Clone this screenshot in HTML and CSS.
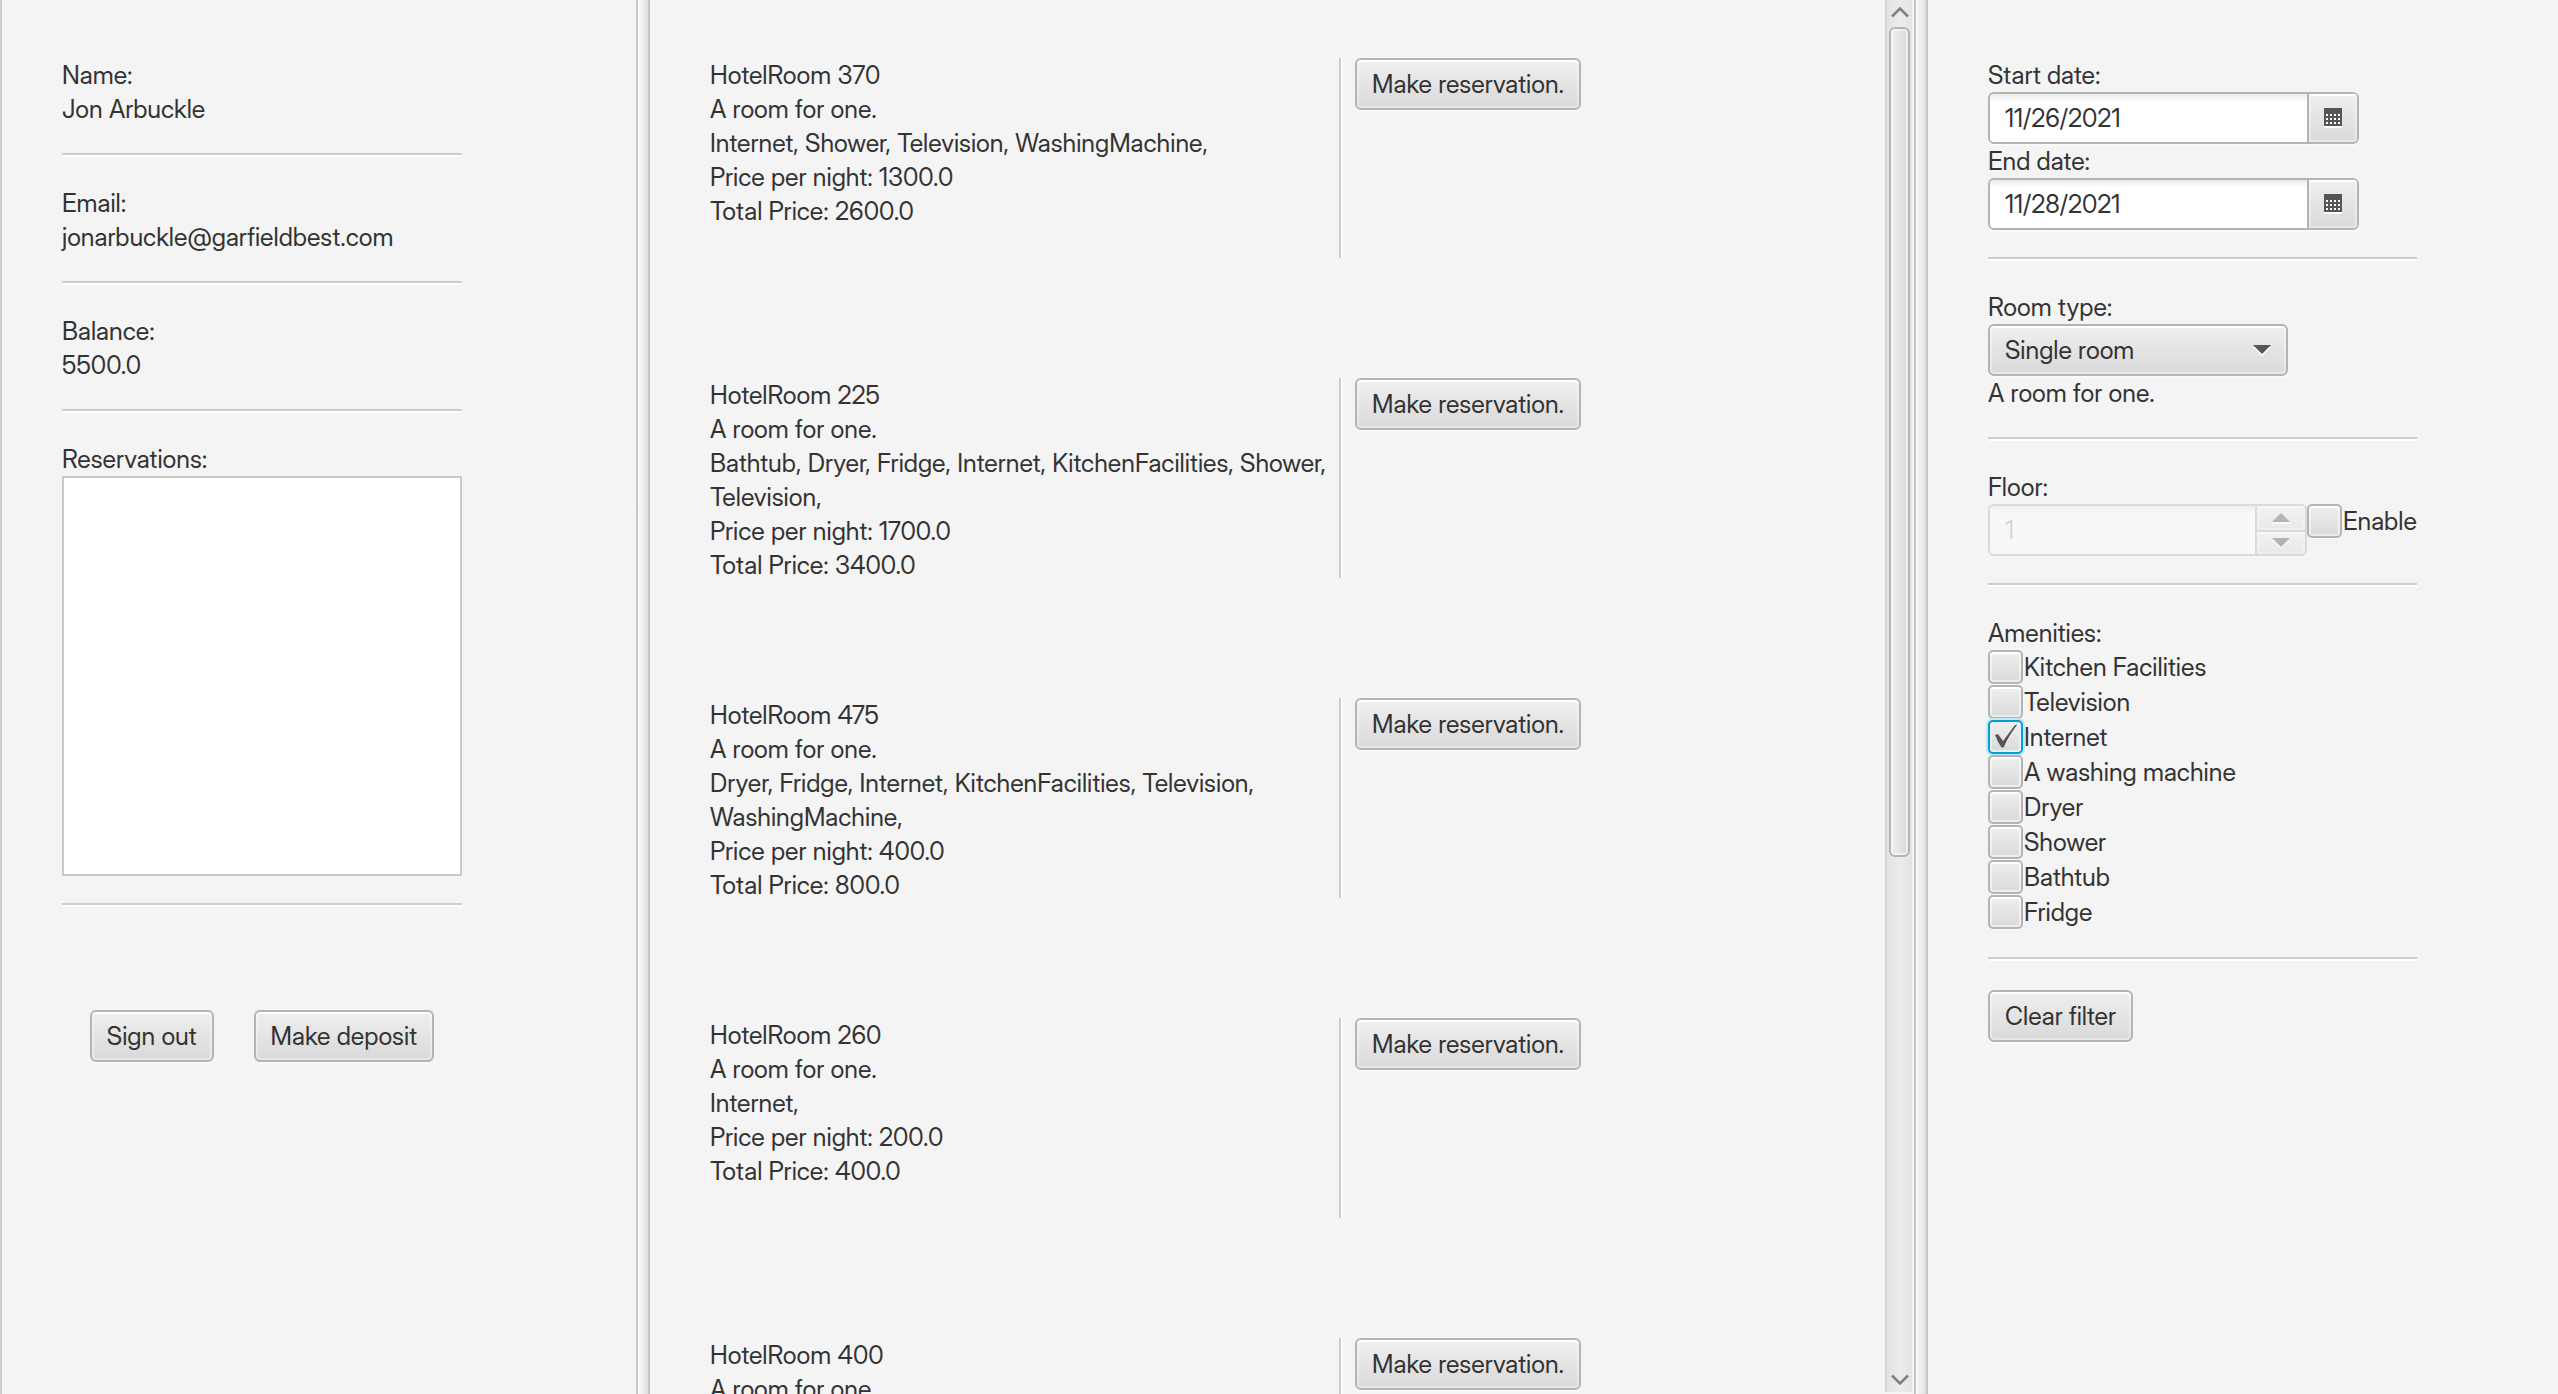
FILE: index.html
```html
<!DOCTYPE html>
<html lang="en">
<head>
<meta charset="utf-8">
<title>Hotel reservations</title>
<link rel="stylesheet" href="styles.css">
</head>
<body>
<div class="split">
  <aside class="pane account">
    <div class="account-body">
      <p>Name:</p>
      <p>Jon Arbuckle</p>
      <hr>
      <p>Email:</p>
      <p>jonarbuckle@garfieldbest.com</p>
      <hr>
      <p>Balance:</p>
      <p>5500.0</p>
      <hr>
      <p>Reservations:</p>
      <div class="reservations"></div>
      <hr>
      <div class="actions">
        <button class="btn" type="button">Sign out</button>
        <button class="btn" type="button">Make deposit</button>
      </div>
    </div>
  </aside>
  <div class="divider"></div>
  <main class="pane results">
    <div class="rooms">
      <article class="room">
        <div class="room-text">
          <p>HotelRoom 370</p>
          <p>A room for one.</p>
          <p>Internet, Shower, Television, WashingMachine,</p>
          <p>Price per night: 1300.0</p>
          <p>Total Price: 2600.0</p>
        </div>
        <div class="rule"></div>
        <button class="btn" type="button">Make reservation.</button>
      </article>
      <article class="room">
        <div class="room-text">
          <p>HotelRoom 225</p>
          <p>A room for one.</p>
          <p>Bathtub, Dryer, Fridge, Internet, KitchenFacilities, Shower, Television,</p>
          <p>Price per night: 1700.0</p>
          <p>Total Price: 3400.0</p>
        </div>
        <div class="rule"></div>
        <button class="btn" type="button">Make reservation.</button>
      </article>
      <article class="room">
        <div class="room-text">
          <p>HotelRoom 475</p>
          <p>A room for one.</p>
          <p>Dryer, Fridge, Internet, KitchenFacilities, Television, WashingMachine,</p>
          <p>Price per night: 400.0</p>
          <p>Total Price: 800.0</p>
        </div>
        <div class="rule"></div>
        <button class="btn" type="button">Make reservation.</button>
      </article>
      <article class="room">
        <div class="room-text">
          <p>HotelRoom 260</p>
          <p>A room for one.</p>
          <p>Internet,</p>
          <p>Price per night: 200.0</p>
          <p>Total Price: 400.0</p>
        </div>
        <div class="rule"></div>
        <button class="btn" type="button">Make reservation.</button>
      </article>
      <article class="room">
        <div class="room-text">
          <p>HotelRoom 400</p>
          <p>A room for one.</p>
        </div>
        <div class="rule"></div>
        <button class="btn" type="button">Make reservation.</button>
      </article>
    </div>
    <div class="scrollbar">
      <svg class="scroll-arrow" viewBox="0 0 18 12"><path d="M1 10.500 9 2.500 17 10.500" fill="none" stroke="#808080" stroke-width="2.500"/></svg>
      <div class="track"><div class="thumb"></div></div>
      <svg class="scroll-arrow" viewBox="0 0 18 12"><path d="M1 1.500 9 9.500 17 1.500" fill="none" stroke="#808080" stroke-width="2.500"/></svg>
    </div>
  </main>
  <div class="divider"></div>
  <aside class="pane filter">
    <form class="filter-body">
      <label for="start">Start date:</label>
      <div class="field date">
        <input id="start" type="text" value="11/26/2021">
        <button type="button" aria-label="Pick start date">
          <svg width="18" height="20" viewBox="0 0 18 20"><path fill="#fff" d="M0 18h18v2H0z"/><path fill="#555" d="M0 0h18v18H0z"/><path fill="#fff" d="M2 6h2v2H2zM6 6h2v2H6zM10 6h2v2h-2zM14 6h2v2h-2zM2 10h2v2H2zM6 10h2v2H6zM10 10h2v2h-2zM14 10h2v2h-2zM2 14h2v2H2zM6 14h2v2H6zM10 14h2v2h-2zM14 14h2v2h-2z"/></svg>
        </button>
      </div>
      <label for="end">End date:</label>
      <div class="field date">
        <input id="end" type="text" value="11/28/2021">
        <button type="button" aria-label="Pick end date">
          <svg width="18" height="20" viewBox="0 0 18 20"><path fill="#fff" d="M0 18h18v2H0z"/><path fill="#555" d="M0 0h18v18H0z"/><path fill="#fff" d="M2 6h2v2H2zM6 6h2v2H6zM10 6h2v2h-2zM14 6h2v2h-2zM2 10h2v2H2zM6 10h2v2H6zM10 10h2v2h-2zM14 10h2v2h-2zM2 14h2v2H2zM6 14h2v2H6zM10 14h2v2h-2zM14 14h2v2h-2z"/></svg>
        </button>
      </div>
      <hr>
      <label for="type">Room type:</label>
      <select class="btn" id="type"><option>Single room</option></select>
      <p>A room for one.</p>
      <hr>
      <label for="floor">Floor:</label>
      <div class="floor">
        <div class="field spinner">
          <input id="floor" type="text" value="1" disabled>
          <div class="steps">
            <button type="button" aria-label="Up" disabled><svg width="18" height="11" viewBox="0 0 18 11"><path fill="#fff" d="M0 9h18v2H0z"/><path fill="#555" d="M0 9 9 0l9 9z"/></svg></button>
            <button type="button" aria-label="Down" disabled><svg width="18" height="11" viewBox="0 0 18 11"><path fill="#fff" d="M0 2h18l-9 9z"/><path fill="#555" d="M0 0h18L9 9z"/></svg></button>
          </div>
        </div>
        <label class="check"><input type="checkbox">Enable</label>
      </div>
      <hr>
      <p>Amenities:</p>
      <label class="check"><input type="checkbox">Kitchen Facilities</label>
      <label class="check"><input type="checkbox">Television</label>
      <label class="check"><input class="focused" type="checkbox" checked>Internet</label>
      <label class="check"><input type="checkbox">A washing machine</label>
      <label class="check"><input type="checkbox">Dryer</label>
      <label class="check"><input type="checkbox">Shower</label>
      <label class="check"><input type="checkbox">Bathtub</label>
      <label class="check"><input type="checkbox">Fridge</label>
      <hr>
      <button class="btn" type="button">Clear filter</button>
    </form>
  </aside>
</div>
</body>
</html>
```
FILE: styles.css
```css
* { box-sizing: border-box; }

body {
  margin: 0;
  background: #f4f4f4;
  color: #333;
  font: 25px/34px "Inter Display", Inter, "Liberation Sans", sans-serif;
}

p { margin: 0; }

button, input, select { font: inherit; color: inherit; }

.split {
  display: grid;
  grid-template-columns: 636fr 14px 1264fr 14px 630fr;
  height: 100vh;
  overflow: hidden;
}

.pane { min-width: 0; min-height: 0; overflow: hidden; }

.divider {
  border: solid #c6c6c6;
  border-width: 0 2px;
  background: linear-gradient(90deg, #fbfbfb, #dedede);
}

hr {
  width: 100%;
  height: 4px;
  margin: 27px 0 29px;
  border: 0;
  border-top: 2px solid #ccc;
  background: #fff;
}

.btn {
  height: 52px;
  padding: 0 15px;
  border: 2px solid #b4b4b4;
  border-radius: 6px;
  background: linear-gradient(#efefef, #d9d9d9);
  box-shadow: inset 0 2px #fff, inset 0 0 0 2px rgba(255, 255, 255, .35), 0 2px #fafafa;
  white-space: nowrap;
}

/* Account column */
.account { border-left: 2px solid #ccc; padding: 58px 60px; }
.account-body { width: 400px; }
.reservations { height: 400px; border: 2px solid #c8c8c8; background: #fff; }
.actions { display: flex; justify-content: center; gap: 40px; padding-top: 74px; }

/* Available rooms */
.results { display: flex; }
.rooms { flex: 1; padding: 58px 60px; }
.room { display: flex; align-items: flex-start; height: 200px; margin-bottom: 120px; }
.room-text { width: 629px; }
.rule { width: 4px; height: 200px; margin-right: 12px; border-left: 2px solid #ccc; background: #fff; }

.scrollbar {
  display: flex;
  flex-direction: column;
  align-items: center;
  width: 27px;
  margin: 0 2px 2px 0;
  padding: 6px 0;
  border-left: 2px solid #d6d6d6;
  background: linear-gradient(90deg, #e2e2e2, #ebebeb 50%, #e4e4e4);
}
.scroll-arrow { flex: none; width: 18px; height: 12px; }
.track { flex: 1; width: 21px; padding: 9px 0; }
.thumb {
  height: 62%;
  border: 2px solid #b4b4b4;
  border-radius: 6px;
  background: linear-gradient(90deg, #efefef, #d9d9d9);
  box-shadow: inset 0 0 0 2px rgba(255, 255, 255, .5);
}

/* Filter column */
.filter { padding: 58px 60px; }
.filter-body { display: flex; flex-direction: column; align-items: flex-start; width: 429px; }

.field {
  display: flex;
  height: 52px;
  border: 2px solid #b4b4b4;
  border-radius: 6px;
  box-shadow: 0 2px #fafafa;
  overflow: hidden;
}
.field input {
  flex: 1;
  min-width: 0;
  padding: 0 15px;
  border: 0;
  background: linear-gradient(#ececec, #fff 8px);
}
.field button {
  display: flex;
  align-items: center;
  justify-content: center;
  width: 48px;
  padding: 0;
  border: 0;
  background: linear-gradient(#efefef, #d9d9d9);
  box-shadow: inset 0 2px #fff, inset 0 0 0 2px rgba(255, 255, 255, .35);
}
.date { width: 371px; }
.field.date button { width: 50px; border-left: 2px solid #b4b4b4; }

.floor { display: flex; align-items: flex-start; }
.spinner { width: 319px; opacity: .4; }
.spinner input { color: #adadad; }
.steps { display: grid; grid-template-rows: 1fr 1fr; width: 50px; border-left: 2px solid #b4b4b4; }
.steps button + button { border-top: 2px solid #b4b4b4; }

select.btn {
  width: 300px;
  appearance: none;
  background:
    url("data:image/svg+xml,%3Csvg xmlns='http://www.w3.org/2000/svg' width='18' height='11'%3E%3Cpath fill='%23fff' d='M0 2h18l-9 9z'/%3E%3Cpath fill='%23555' d='M0 0h18L9 9z'/%3E%3C/svg%3E") right 15px center no-repeat,
    linear-gradient(#efefef, #d9d9d9);
}

.check { display: flex; gap: 1px; height: 35px; white-space: nowrap; }
.check input {
  appearance: none;
  width: 35px;
  height: 34px;
  margin: 0;
  border: 2px solid #b4b4b4;
  border-radius: 5px;
  background: linear-gradient(#efefef, #d9d9d9);
  box-shadow: inset 0 2px #fff, inset 0 0 0 2px rgba(255, 255, 255, .5), 0 1px #fafafa;
}
.check input:checked {
  background:
    url("data:image/svg+xml,%3Csvg xmlns='http://www.w3.org/2000/svg' width='24' height='26'%3E%3Cpath fill='%23fff' d='M1 13l3-1 5 6L22 2 9 25z'/%3E%3Cpath fill='%23555' d='M1 11l3-1 5 7L21 1h2C18 8 13 15 10 23l-2 1C5 20 3 16 1 11z'/%3E%3C/svg%3E") center no-repeat,
    linear-gradient(#efefef, #d9d9d9);
}
.check .focused {
  border-color: #039ed3;
  box-shadow: inset 0 0 0 2px #e4f1f6, 0 0 0 2px #c5e5f0;
}
```
